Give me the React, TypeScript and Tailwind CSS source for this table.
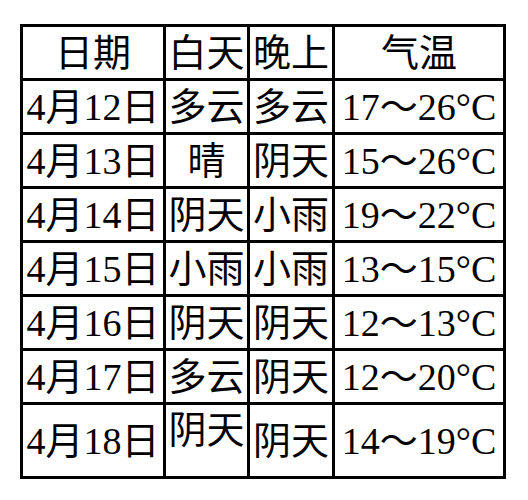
import React from "react";

const rows: [string, string, string, string][] = [
  ["4月12日", "多云", "多云", "17～26°C"],
  ["4月13日", "晴", "阴天", "15～26°C"],
  ["4月14日", "阴天", "小雨", "19～22°C"],
  ["4月15日", "小雨", "小雨", "13～15°C"],
  ["4月16日", "阴天", "阴天", "12～13°C"],
  ["4月17日", "多云", "阴天", "12～20°C"],
];

const cell = "border-[3px] border-black p-0 text-center align-middle leading-none whitespace-nowrap";

export default function App() {
  return (
    <div className="w-[528px] h-[500px] bg-white pt-[24px] pl-[20px]" style={{ fontFamily: '"Liberation Serif", "Noto Sans CJK SC", serif' }}>
      <table className="table-fixed border-collapse text-[38px] text-black" style={{ width: 483 }}>
        <colgroup>
          <col className="w-[143px]" />
          <col className="w-[84px]" />
          <col className="w-[85px]" />
          <col className="w-[171px]" />
        </colgroup>
        <tbody>
          <tr className="h-[54px]">
            <td className={cell}>日期</td>
            <td className={cell}>白天</td>
            <td className={cell}>晚上</td>
            <td className={cell}>气温</td>
          </tr>
          {rows.map((r) => (
            <tr key={r[0]} className="h-[54px]">
              <td className={cell}>{r[0]}</td>
              <td className={cell}>{r[1]}</td>
              <td className={cell}>{r[2]}</td>
              <td className={cell}>{r[3]}</td>
            </tr>
          ))}
          <tr className="h-[74px]">
            <td className={cell}>4月18日</td>
            <td className={`${cell} !align-top pt-[6px]`}>阴天</td>
            <td className={cell}>阴天</td>
            <td className={cell}>14～19°C</td>
          </tr>
        </tbody>
      </table>
    </div>
  );
}
